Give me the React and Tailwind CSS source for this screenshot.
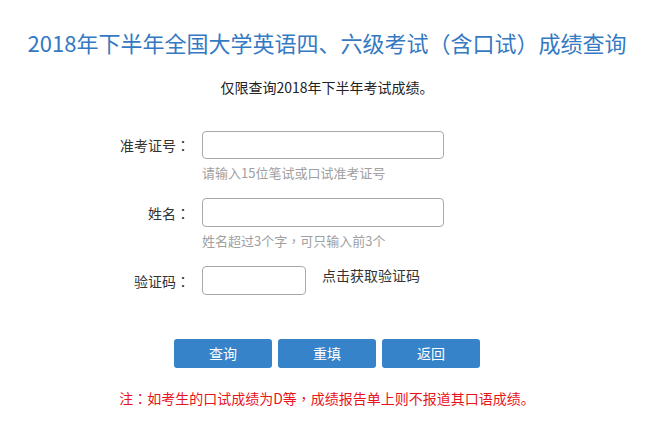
function P({ children }) {
  return <span style={{ fontFamily: '"Noto Sans CJK TC", sans-serif' }}>{children}</span>;
}

export default function App() {
  const font = { fontFamily: '"Noto Sans CJK SC", "Noto Sans", sans-serif' };
  return (
    <div className="w-[672px] h-[431px] bg-white overflow-hidden" style={font}>
      <div className="w-[654px] flex flex-col items-center">
        <h1 className="mt-[27px] h-[30px] leading-[30px] text-[22px] text-[#3479c2] font-normal whitespace-nowrap">
          2018年下半年全国大学英语四、六级考试（含口试）成绩查询
        </h1>
        <p className="mt-[20px] h-[20px] leading-[20px] text-[14px] text-[#222]">
          仅限查询2018年下半年考试成绩。
        </p>
        <div className="w-full mt-[34px] flex flex-col">
          <div className="flex items-center">
            <label className="w-[190px] text-right text-[14px] text-[#333] leading-[20px]">准考证号<P>：</P></label>
            <input className="ml-[12px] w-[242px] h-[28px] border border-[#a9a9a9] rounded-[4px] outline-none px-2 text-[14px]" />
          </div>
          <div className="ml-[202px] mt-[5px] h-[18px] leading-[18px] text-[13px] text-[#a0a0a0]">
            请输入15位笔试或口试准考证号
          </div>
          <div className="flex items-center mt-[16px]">
            <label className="w-[190px] text-right text-[14px] text-[#333] leading-[20px]">姓名<P>：</P></label>
            <input className="ml-[12px] w-[242px] h-[29px] border border-[#a9a9a9] rounded-[4px] outline-none px-2 text-[14px]" />
          </div>
          <div className="ml-[202px] mt-[5px] h-[18px] leading-[18px] text-[13px] text-[#a0a0a0]">
            姓名超过3个字<P>，</P>可只输入前3个
          </div>
          <div className="flex items-start mt-[16px]">
            <label className="w-[190px] text-right text-[14px] text-[#333] leading-[20px] mt-[5px]">验证码<P>：</P></label>
            <input className="ml-[12px] w-[104px] h-[29px] border border-[#a9a9a9] rounded-[4px] outline-none px-2 text-[14px]" />
            <span className="ml-[16px] -mt-[1px] text-[14px] leading-[20px] text-[#333] cursor-pointer">点击获取验证码</span>
          </div>
        </div>
        <div className="mt-[44px] flex gap-[6px]">
          <button className="w-[98px] h-[29px] bg-[#3683c9] text-white text-[14px] rounded-[3px]">查询</button>
          <button className="w-[98px] h-[29px] bg-[#3683c9] text-white text-[14px] rounded-[3px]">重填</button>
          <button className="w-[98px] h-[29px] bg-[#3683c9] text-white text-[14px] rounded-[3px]">返回</button>
        </div>
        <p className="mt-[20px] h-[20px] leading-[20px] text-[14px] text-[#e8141c] whitespace-nowrap">
          注<P>：</P>如考生的口试成绩为D等<P>，</P>成绩报告单上则不报道其口语成绩。
        </p>
      </div>
    </div>
  );
}
